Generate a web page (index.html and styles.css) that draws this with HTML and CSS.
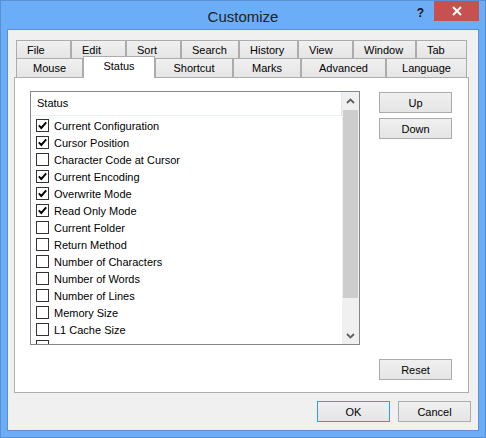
FILE: index.html
```html
<!DOCTYPE html>
<html lang="en">
<head>
  <meta charset="UTF-8">
  <title>Customize</title>
  <link rel="stylesheet" href="styles.css">
</head>
<body>
  <div class="window">
    <div class="titlebar">
      <span></span>
      <span class="title">Customize</span>
      <div class="caption-buttons">
        <span class="help">?</span>
        <span class="close">
          <svg width="10" height="10" viewBox="0 0 10 10"><path d="M1 1 L9 9 M9 1 L1 9" stroke="#fff" stroke-width="2"/></svg>
        </span>
      </div>
    </div>

    <div class="client">
      <div class="tabs">
        <div class="tab-row top">
          <div class="tab t-file">File</div>
          <div class="tab t-edit">Edit</div>
          <div class="tab t-sort">Sort</div>
          <div class="tab t-search">Search</div>
          <div class="tab t-history">History</div>
          <div class="tab t-view">View</div>
          <div class="tab t-window">Window</div>
          <div class="tab t-tab">Tab</div>
        </div>
        <div class="tab-row bottom">
          <div class="tab t-mouse">Mouse</div>
          <div class="tab t-status selected">Status</div>
          <div class="tab t-shortcut">Shortcut</div>
          <div class="tab t-marks">Marks</div>
          <div class="tab t-advanced">Advanced</div>
          <div class="tab t-language">Language</div>
        </div>
      </div>

      <div class="panel">
        <div class="listbox">
          <div class="list-main">
            <div class="list-header">Status</div>
            <ul class="items">
              <li><span class="check on"><svg width="11" height="11" viewBox="0 0 11 11"><path d="M1.8 5.4 L4.3 8 L9.2 2.4" fill="none" stroke="#000" stroke-width="1.9"/></svg></span>Current Configuration</li>
              <li><span class="check on"><svg width="11" height="11" viewBox="0 0 11 11"><path d="M1.8 5.4 L4.3 8 L9.2 2.4" fill="none" stroke="#000" stroke-width="1.9"/></svg></span>Cursor Position</li>
              <li><span class="check"></span>Character Code at Cursor</li>
              <li><span class="check on"><svg width="11" height="11" viewBox="0 0 11 11"><path d="M1.8 5.4 L4.3 8 L9.2 2.4" fill="none" stroke="#000" stroke-width="1.9"/></svg></span>Current Encoding</li>
              <li><span class="check on"><svg width="11" height="11" viewBox="0 0 11 11"><path d="M1.8 5.4 L4.3 8 L9.2 2.4" fill="none" stroke="#000" stroke-width="1.9"/></svg></span>Overwrite Mode</li>
              <li><span class="check on"><svg width="11" height="11" viewBox="0 0 11 11"><path d="M1.8 5.4 L4.3 8 L9.2 2.4" fill="none" stroke="#000" stroke-width="1.9"/></svg></span>Read Only Mode</li>
              <li><span class="check"></span>Current Folder</li>
              <li><span class="check"></span>Return Method</li>
              <li><span class="check"></span>Number of Characters</li>
              <li><span class="check"></span>Number of Words</li>
              <li><span class="check"></span>Number of Lines</li>
              <li><span class="check"></span>Memory Size</li>
              <li><span class="check"></span>L1 Cache Size</li>
              <li><span class="check"></span></li>
            </ul>
          </div>
          <div class="scrollbar">
            <div class="sb-btn">
              <svg width="9" height="6" viewBox="0 0 9 6"><path d="M1 5 L4.5 1.5 L8 5" fill="none" stroke="#606060" stroke-width="1.8"/></svg>
            </div>
            <div class="sb-track"><div class="sb-thumb"></div></div>
            <div class="sb-btn">
              <svg width="9" height="6" viewBox="0 0 9 6"><path d="M1 1 L4.5 4.5 L8 1" fill="none" stroke="#606060" stroke-width="1.8"/></svg>
            </div>
          </div>
        </div>

        <div class="side-buttons">
          <button class="btn">Up</button>
          <button class="btn">Down</button>
        </div>
        <button class="btn reset">Reset</button>
      </div>

      <div class="footer">
        <button class="btn default">OK</button>
        <button class="btn">Cancel</button>
      </div>
    </div>
  </div>
</body>
</html>
```

FILE: styles.css
```css
/* Customize dialog */
* {
  box-sizing: border-box;
}
body {
  margin: 0;
  width: 486px;
  height: 438px;
  overflow: hidden;
  font-family: "Liberation Sans", Arial, sans-serif;
  font-size: 11px;
  color: #000;
}
.window {
  width: 486px;
  height: 438px;
  background-color: #6badf6;
  border: 1px solid #5a8fd2;
  padding: 0 6px 6px 6px;
  display: flex;
  flex-direction: column;
}
.titlebar {
  height: 28px;
  display: grid;
  grid-template-columns: 1fr auto 1fr;
  align-items: start;
  margin: 0 -6px;
}
.title {
  font-size: 15px;
  color: #222;
  line-height: 28px;
  padding-top: 2px;
}
.caption-buttons {
  display: flex;
  justify-content: flex-end;
  align-items: flex-start;
  margin-right: 6px;
}
.help {
  font-weight: bold;
  font-size: 12px;
  color: #111;
  margin-top: 5px;
  margin-right: 10px;
}
.close {
  width: 45px;
  height: 20px;
  background-color: #c75050;
  display: flex;
  align-items: center;
  justify-content: center;
}
.client {
  flex: 1;
  background-color: #f0f0f0;
  border: 1px solid #5a8fd2;
  padding: 10px 7px 8px 6px;
  display: flex;
  flex-direction: column;
}

/* tabs */
.tabs {
  margin: 0 4px 0 2px;
}
.tab-row {
  display: flex;
}
.tab-row.top {
  height: 18px;
}
.tab-row.bottom {
  height: 19px;
}
.tab {
  border: 1px solid #acacac;
  border-bottom: none;
  background: linear-gradient(#f0f0f0, #e5e5e5);
  display: flex;
  align-items: center;
  justify-content: center;
  white-space: nowrap;
}
.tab-row.top .tab {
  justify-content: flex-start;
  padding-left: 10px;
}
.tab.selected {
  background: #fff;
  margin-top: -2px;
  margin-bottom: -1px;
  position: relative;
  z-index: 1;
  padding-bottom: 3px;
}
.t-file, .t-edit, .t-sort, .t-view { width: 55px; }
.t-search { width: 58px; }
.t-history { width: 59px; }
.t-window { width: 63px; }
.t-tab { width: 51px; }
.t-mouse { width: 67px; }
.t-status { width: 72px; }
.t-shortcut { width: 78px; }
.t-marks { width: 68px; }
.t-advanced { width: 85px; }
.t-language { width: 81px; }

/* panel */
.panel {
  background-color: #fff;
  border: 1px solid #adadad;
  margin-right: 2px;
  height: 316px;
  padding: 13px 0 12px 15px;
  display: grid;
  grid-template-columns: 330px 73px;
  grid-template-rows: 254px 21px;
  column-gap: 19px;
  row-gap: 14px;
}
.listbox {
  grid-row: 1;
  grid-column: 1;
  border: 1px solid #828790;
  display: flex;
  overflow: hidden;
}
.list-main {
  flex: 1;
  overflow: hidden;
}
.list-header {
  height: 24px;
  line-height: 23px;
  padding-left: 6px;
  border-right: 1px solid #dfe7f1;
  border-bottom: 1px solid #e8eef6;
}
.items {
  list-style: none;
  margin: 0;
  padding: 1px 0 0 5px;
}
.items li {
  height: 17px;
  display: flex;
  align-items: center;
  gap: 5px;
  white-space: nowrap;
}
.check {
  width: 13px;
  height: 13px;
  border: 1px solid #333;
  background-color: #fff;
  display: flex;
  align-items: center;
  justify-content: center;
}
.scrollbar {
  width: 17px;
  background-color: #f0f0f0;
  display: flex;
  flex-direction: column;
}
.sb-btn {
  height: 17px;
  display: flex;
  align-items: center;
  justify-content: center;
}
.sb-track {
  flex: 1;
  padding: 1px 1px 0 1px;
}
.sb-thumb {
  height: 188px;
  background-color: #cdcdcd;
}

/* buttons */
.btn {
  width: 73px;
  height: 21px;
  font-family: inherit;
  font-size: 11px;
  color: #000;
  border: 1px solid #acacac;
  background: linear-gradient(#f0f0f0, #e5e5e5);
  padding: 0;
  margin: 0;
}
.btn.default {
  border-color: #3399ff;
}
.side-buttons {
  grid-row: 1;
  grid-column: 2;
  display: flex;
  flex-direction: column;
  gap: 5px;
  margin-top: 1px;
}
.reset {
  grid-row: 2;
  grid-column: 2;
}
.footer {
  display: flex;
  justify-content: flex-end;
  gap: 8px;
  margin-top: 8px;
}
```
